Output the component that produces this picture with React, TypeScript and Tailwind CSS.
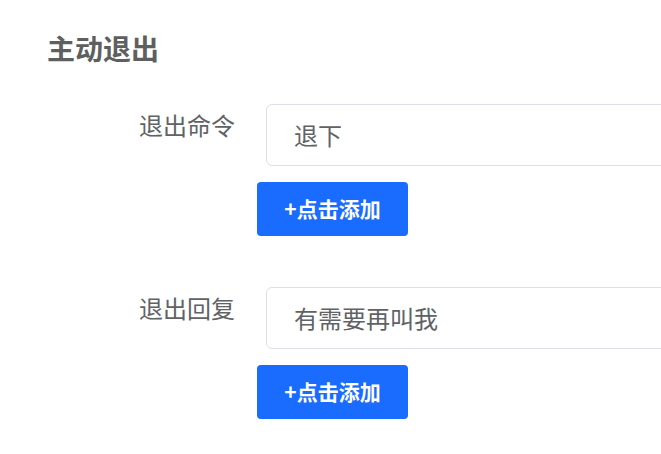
const items = [
  { label: '退出命令', value: '退下' },
  { label: '退出回复', value: '有需要再叫我' },
];

export default function App() {
  return (
    <div
      className="w-[661px] h-[454px] overflow-hidden bg-white pl-[47px] pt-[34px] text-[#606266]"
      style={{ fontFamily: '"Noto Sans CJK SC", "Noto Sans", sans-serif' }}
    >
      <h2 className="text-[28px] font-bold leading-none text-[#5f5f5f]">主动退出</h2>
      <div className="mt-[42px] flex flex-col gap-[51px]">
        {items.map((item) => (
          <div key={item.label} className="flex">
            <label className="w-[189px] shrink-0 pt-[9px] pr-[1px] text-right text-[24px] leading-none">
              {item.label}
            </label>
            <div className="ml-[21px] flex flex-col items-start">
              <div className="ml-[9px] flex h-[62px] w-[500px] items-center rounded-md border border-[#dcdfe6] px-[27px] text-[24px]">
                {item.value}
              </div>
              <button className="mt-4 h-[54px] w-[151px] rounded-[4px] bg-[#1a6bff] text-[21px] font-bold text-white">
                +点击添加
              </button>
            </div>
          </div>
        ))}
      </div>
    </div>
  );
}
